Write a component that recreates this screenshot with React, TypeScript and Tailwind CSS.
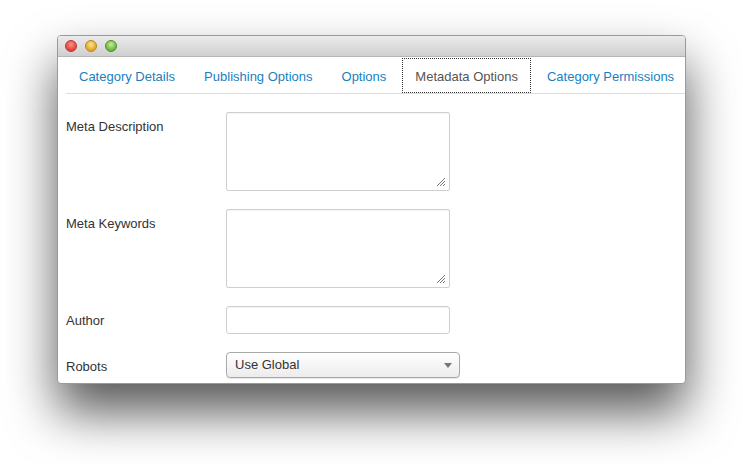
import React from 'react'

const tabs = ['Category Details', 'Publishing Options', 'Options', 'Metadata Options', 'Category Permissions']
const activeTab = 'Metadata Options'

function Grip() {
  return (
    <svg width="10" height="10" viewBox="0 0 10 10" className="mr-[3px] mb-[3px]">
      <path d="M9 1 L1 9 M9 4 L4 9 M9 7 L7 9" stroke="#777" strokeWidth="1" fill="none" />
    </svg>
  )
}

function FakeTextarea() {
  return (
    <div className="w-[224px] h-[79px] border border-[#cfcfcf] rounded-[2px] bg-white flex items-end justify-end shadow-[inset_0_1px_1px_rgba(0,0,0,0.05)]">
      <Grip />
    </div>
  )
}

function Row({ label, children }: { label: string; children: React.ReactNode }) {
  return (
    <div className="flex">
      <div className="w-[160px] pt-[6px] text-[13px] leading-[18px] text-[#333]">{label}</div>
      {children}
    </div>
  )
}

export default function App() {
  return (
    <div
      className="w-[743px] h-[464px] bg-white pt-[35px] pl-[57px]"
      style={{ fontFamily: '"Liberation Sans", Arial, sans-serif' }}
    >
      <div className="w-[629px] h-[349px] rounded-[4px] overflow-hidden border border-[#9a9a9a] bg-white flex flex-col shadow-[0_28px_50px_rgba(0,0,0,0.66)]">
        {/* title bar */}
        <div className="h-[21px] shrink-0 flex items-center gap-[8px] pl-[7px] bg-gradient-to-b from-[#ebebeb] to-[#cfcfcf] border-b border-[#b5b5b5]">
          <span className="w-[12px] h-[12px] rounded-full bg-[radial-gradient(circle_at_50%_35%,#ff8f8a,#e0413a_70%)] border border-[#b33a33]" />
          <span className="w-[12px] h-[12px] rounded-full bg-[radial-gradient(circle_at_50%_35%,#ffe28a,#e2a52c_70%)] border border-[#b98522]" />
          <span className="w-[12px] h-[12px] rounded-full bg-[radial-gradient(circle_at_50%_35%,#c4f08e,#6cb443_70%)] border border-[#4f8e31]" />
        </div>

        <div className="pl-[8px] flex flex-col">
          {/* tabs */}
          <div className="flex border-b border-[#dddddd]">
            {tabs.map((t) => (
              <div
                key={t}
                className={
                  t === activeTab
                    ? 'mt-px h-[35px] pt-[2px] px-[12px] mr-[3px] shrink-0 whitespace-nowrap flex items-center text-[13px] text-[#555] border border-dotted border-[#333] bg-white'
                    : 'mt-px h-[35px] pt-[2px] px-[12px] mr-[3px] shrink-0 whitespace-nowrap flex items-center text-[13px] text-[#1a7fc1] border border-transparent'
                }
              >
                {t}
              </div>
            ))}
          </div>

          {/* form */}
          <div className="pt-[18px] flex flex-col gap-[18px]">
            <Row label="Meta Description">
              <FakeTextarea />
            </Row>
            <Row label="Meta Keywords">
              <FakeTextarea />
            </Row>
            <Row label="Author">
              <div className="w-[224px] h-[28px] border border-[#cfcfcf] rounded-[3px] bg-white shadow-[inset_0_1px_1px_rgba(0,0,0,0.05)]" />
            </Row>
            <Row label="Robots">
              <div className="w-[234px] h-[26px] border border-[#a9a9a9] rounded-[4px] bg-gradient-to-b from-white to-[#ececec] flex items-center justify-between pl-[8px] pr-[7px] text-[13px] text-[#333] shadow-[0_1px_1px_rgba(0,0,0,0.1)]">
                <span>Use Global</span>
                <svg width="8" height="5" viewBox="0 0 8 5">
                  <path d="M0 0 L8 0 L4 5 Z" fill="#777" />
                </svg>
              </div>
            </Row>
          </div>
        </div>
      </div>
    </div>
  )
}
